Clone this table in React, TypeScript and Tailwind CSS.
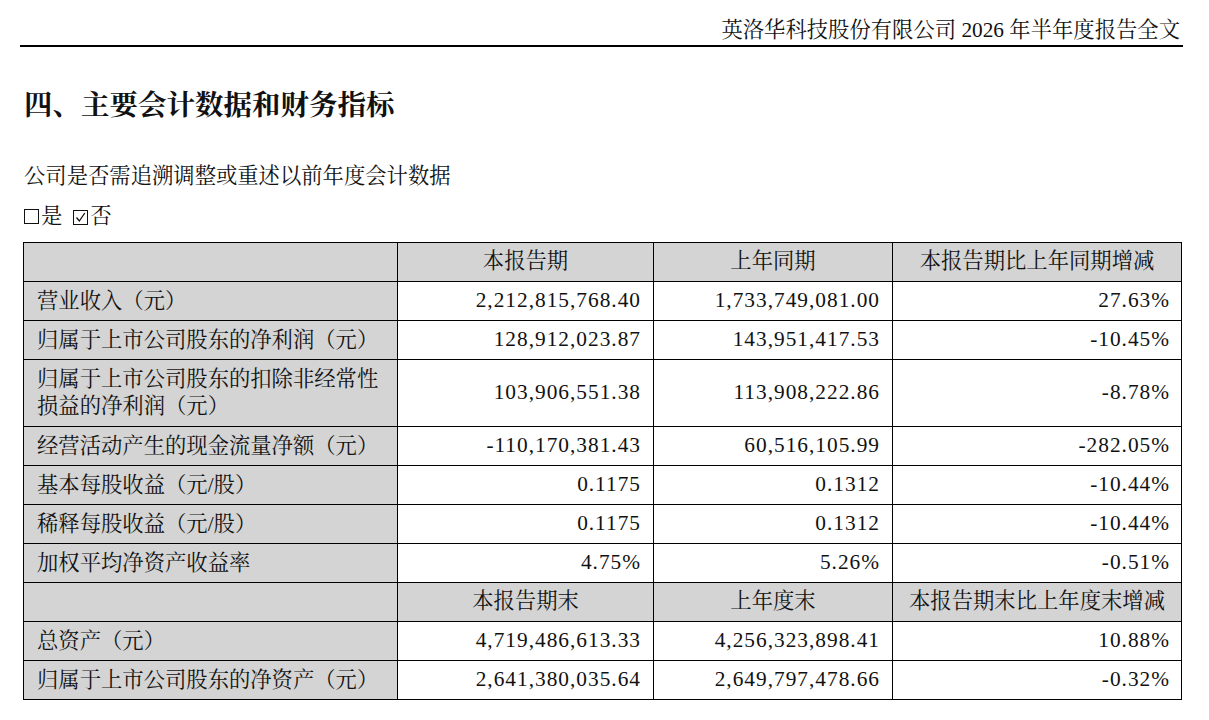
import React from 'react';

const font = "font-['Liberation_Serif','Noto_Serif_CJK_SC','Noto_Sans_CJK_SC',serif]";

type Row = { label: string[]; a: string; b: string; c: string; tall?: boolean };

const rows1: Row[] = [
  { label: ['营业收入（元）'], a: '2,212,815,768.40', b: '1,733,749,081.00', c: '27.63%' },
  { label: ['归属于上市公司股东的净利润（元）'], a: '128,912,023.87', b: '143,951,417.53', c: '-10.45%' },
  { label: ['归属于上市公司股东的扣除非经常性', '损益的净利润（元）'], a: '103,906,551.38', b: '113,908,222.86', c: '-8.78%', tall: true },
  { label: ['经营活动产生的现金流量净额（元）'], a: '-110,170,381.43', b: '60,516,105.99', c: '-282.05%' },
  { label: ['基本每股收益（元/股）'], a: '0.1175', b: '0.1312', c: '-10.44%' },
  { label: ['稀释每股收益（元/股）'], a: '0.1175', b: '0.1312', c: '-10.44%' },
  { label: ['加权平均净资产收益率'], a: '4.75%', b: '5.26%', c: '-0.51%' },
];

const rows2: Row[] = [
  { label: ['总资产（元）'], a: '4,719,486,613.33', b: '4,256,323,898.41', c: '10.88%' },
  { label: ['归属于上市公司股东的净资产（元）'], a: '2,641,380,035.64', b: '2,649,797,478.66', c: '-0.32%' },
];

function HeadRow({ cols }: { cols: string[] }) {
  return (
    <tr className="h-[39px] bg-[#d4d4d4]">
      <td className="border border-black"></td>
      {cols.map((c) => (
        <td key={c} className="border border-black text-center px-2">{c}</td>
      ))}
    </tr>
  );
}

function DataRow({ r }: { r: Row }) {
  return (
    <tr className={r.tall ? 'h-[67px]' : 'h-[39px]'}>
      <td className="border border-black bg-[#d4d4d4] pl-[13px] pr-2 leading-[27px]">
        {r.label.map((l) => (
          <div key={l}>{l}</div>
        ))}
      </td>
      <td className="border border-black text-right pr-3 tracking-[1px]">{r.a}</td>
      <td className="border border-black text-right pr-3 tracking-[1px]">{r.b}</td>
      <td className="border border-black text-right pr-[11px] tracking-[1px]">{r.c}</td>
    </tr>
  );
}

function Box({ checked }: { checked?: boolean }) {
  return (
    <span className="inline-flex w-[15px] h-[15px] border border-[#111] mr-[2px] items-center justify-center">
      {checked && (
        <svg width="11" height="11" viewBox="0 0 11 11" fill="none" stroke="#111" strokeWidth="1.3">
          <path d="M1.5 5.5 L4.3 9 L9.8 1" />
        </svg>
      )}
    </span>
  );
}

export default function App() {
  return (
    <div className={`w-[1209px] h-[720px] overflow-hidden bg-white text-[#111] ${font}`}>
      <header className="ml-[20px] w-[1163px] pt-[17px] pb-[2px] pr-[3px] border-b-2 border-black flex justify-end text-[21.33px] leading-[26px]">
        英洛华科技股份有限公司 2026 年半年度报告全文
      </header>

      <h1 className="mt-[39px] pl-[24px] text-[28.5px] leading-[40px] font-bold">四、主要会计数据和财务指标</h1>

      <p className="mt-[35px] pl-[24px] text-[21.33px] leading-[30px]">公司是否需追溯调整或重述以前年度会计数据</p>

      <p className="mt-[10px] pl-[24px] text-[21.33px] leading-[30px] flex items-center">
        <Box />
        <span>是</span>
        <span className="ml-[11px]"><Box checked /></span>
        <span>否</span>
      </p>

      <table className="mt-[11px] ml-[23px] w-[1158px] border-collapse table-fixed text-[21.33px]">
        <colgroup>
          <col className="w-[374px]" />
          <col className="w-[256px]" />
          <col className="w-[239px]" />
          <col className="w-[289px]" />
        </colgroup>
        <tbody>
          <HeadRow cols={['本报告期', '上年同期', '本报告期比上年同期增减']} />
          {rows1.map((r) => (
            <DataRow key={r.label[0]} r={r} />
          ))}
          <HeadRow cols={['本报告期末', '上年度末', '本报告期末比上年度末增减']} />
          {rows2.map((r) => (
            <DataRow key={r.label[0]} r={r} />
          ))}
        </tbody>
      </table>
    </div>
  );
}
